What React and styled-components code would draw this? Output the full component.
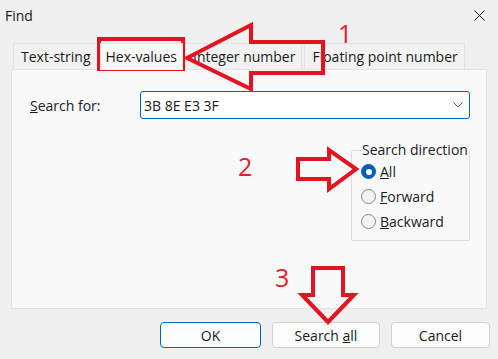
import React, { useState } from "react"
import styled, { createGlobalStyle } from "styled-components"

const GlobalStyle = createGlobalStyle`
  html, body {
    margin: 0;
    padding: 0;
    background: #f0f0f0;
  }
  body {
    font-family: "Open Sans", "Liberation Sans", sans-serif;
    font-size: 14px;
    color: #1a1a1a;
  }
`

const Window = styled.div`
  position: relative;
  width: 498px;
  height: 359px;
  background: #f0f0f0;
  display: flex;
  flex-direction: column;
  overflow: hidden;
`

const TitleBar = styled.div`
  height: 30px;
  display: flex;
  align-items: center;
  justify-content: space-between;
  padding: 0 12px 0 5px;
  font-size: 14px;
`

const CloseButton = styled.button`
  border: none;
  background: none;
  padding: 0;
  width: 14px;
  height: 14px;
  display: flex;
  align-items: center;
  justify-content: center;
  cursor: pointer;
`

const TabStrip = styled.div`
  display: flex;
  margin: 13px 0 0 13px;
  height: 26px;
`

const Tab = styled.div`
  display: flex;
  align-items: center;
  padding: ${p => (p.active ? "0 5px 0 5px" : "0 6px 0 7px")};
  margin-right: 2px;
  background: ${p => (p.active ? "#f9f9f9" : "#f2f2f2")};
  border: 1px solid #e3e3e3;
  border-bottom: ${p => (p.active ? "1px solid #f9f9f9" : "none")};
  margin-bottom: ${p => (p.active ? "-1px" : "0")};
  position: relative;
  z-index: ${p => (p.active ? 1 : 0)};
  white-space: nowrap;
`

const Panel = styled.div`
  margin: 0 11px;
  height: 240px;
  box-sizing: border-box;
  background: #f9f9f9;
  border: 1px solid #e3e3e3;
  padding: 21px 16px 0 18px;
  display: flex;
  flex-direction: column;
`

const SearchRow = styled.div`
  display: flex;
  align-items: center;
`

const Label = styled.label`
  width: 110px;
`

const Combo = styled.div`
  flex: 1;
  height: 28px;
  box-sizing: border-box;
  display: flex;
  align-items: center;
  justify-content: space-between;
  background: #fff;
  border: 1px solid #0067c0;
  border-radius: 3px;
  padding: 0 6px 0 3px;
`

const GroupBox = styled.fieldset`
  align-self: flex-end;
  margin: 22px 0 0 0;
  width: 119px;
  height: 100px;
  box-sizing: border-box;
  border: 1px solid #dcdcdc;
  border-radius: 2px;
  padding: 0 0 0 9px;
`

const Legend = styled.legend`
  padding: 0 1px;
  margin-left: 0;
  line-height: 18px;
  white-space: nowrap;
`

const RadioRow = styled.div`
  display: flex;
  align-items: center;
  height: 25px;
  gap: 4px;
`

const RadioCircle = styled.span`
  width: 15px;
  height: 15px;
  box-sizing: border-box;
  border-radius: 50%;
  display: flex;
  align-items: center;
  justify-content: center;
  background: ${p => (p.checked ? "#005fb8" : "#f3f3f3")};
  border: 1px solid ${p => (p.checked ? "#005fb8" : "#868686")};

  &::after {
    content: "";
    display: ${p => (p.checked ? "block" : "none")};
    width: 6px;
    height: 6px;
    border-radius: 50%;
    background: #fff;
  }
`

const ButtonRow = styled.div`
  display: flex;
  justify-content: flex-end;
  gap: 11px;
  margin-top: 13px;
  padding-right: 8px;
`

const Button = styled.button`
  width: ${p => p.w}px;
  height: 26px;
  font-family: inherit;
  font-size: 14px;
  color: #1a1a1a;
  background: #fdfdfd;
  border: 1px solid ${p => (p.primary ? "#0067c0" : "#d0d0d0")};
  border-radius: 4px;
  padding: 0;
  cursor: pointer;
`

const Overlay = styled.svg`
  position: absolute;
  left: 0;
  top: 0;
  pointer-events: none;
`

const Note = styled.span`
  position: absolute;
  left: ${p => p.x}px;
  top: ${p => p.y}px;
  color: #e3202a;
  font-size: 25px;
  line-height: 1;
`

const radios = [
  { key: "all", mnemonic: "A", rest: "ll" },
  { key: "fwd", mnemonic: "F", rest: "orward" },
  { key: "bwd", mnemonic: "B", rest: "ackward" },
]

const tabs = ["Text-string", "Hex-values", "Integer number", "Floating point number"]

export default function App() {
  const [dir, setDir] = useState("all")
  const [tab, setTab] = useState(1)

  return (
    <Window>
      <GlobalStyle />
      <TitleBar>
        <span>Find</span>
        <CloseButton aria-label="Close">
          <svg width="11" height="11" viewBox="0 0 11 11">
            <path d="M0.5 0.5 L10.5 10.5 M10.5 0.5 L0.5 10.5" stroke="#1a1a1a" strokeWidth="1" />
          </svg>
        </CloseButton>
      </TitleBar>

      <TabStrip>
        {tabs.map((t, i) => (
          <Tab key={t} active={i === tab} onClick={() => setTab(i)}>
            {t}
          </Tab>
        ))}
      </TabStrip>

      <Panel>
        <SearchRow>
          <Label>
            <u>S</u>earch for:
          </Label>
          <Combo>
            <span>3B 8E E3 3F</span>
            <svg width="10" height="6" viewBox="0 0 10 6">
              <path d="M0.5 0.5 L5 5 L9.5 0.5" fill="none" stroke="#555" strokeWidth="1" />
            </svg>
          </Combo>
        </SearchRow>

        <GroupBox>
          <Legend>Search direction</Legend>
          {radios.map(r => (
            <RadioRow key={r.key} onClick={() => setDir(r.key)}>
              <RadioCircle checked={dir === r.key} />
              <span>
                <u>{r.mnemonic}</u>
                {r.rest}
              </span>
            </RadioRow>
          ))}
        </GroupBox>
      </Panel>

      <ButtonRow>
        <Button primary w={101}>OK</Button>
        <Button w={108}>
          Search <u>a</u>ll
        </Button>
        <Button w={99}>Cancel</Button>
      </ButtonRow>

      {/* red annotations drawn over the dialog */}
      <Overlay width="498" height="359" viewBox="0 0 498 359">
        <g fill="none" stroke="#e3141f" strokeWidth="4" strokeLinejoin="miter">
          <rect x="99" y="39" width="84" height="30" />
          <path d="M187 58 L251 25 L251 42 L323 42 L323 73 L251 73 L251 89 Z" />
          <path d="M356 169 L329 150 L329 159 L298 159 L298 179 L329 179 L329 189 Z" />
          <path d="M313 268 L343 268 L343 295 L354 295 L328 322 L302 295 L313 295 Z" />
        </g>
      </Overlay>
      <Note x={338} y={21}>1</Note>
      <Note x={238} y={154}>2</Note>
      <Note x={275} y={265}>3</Note>
    </Window>
  )
}
